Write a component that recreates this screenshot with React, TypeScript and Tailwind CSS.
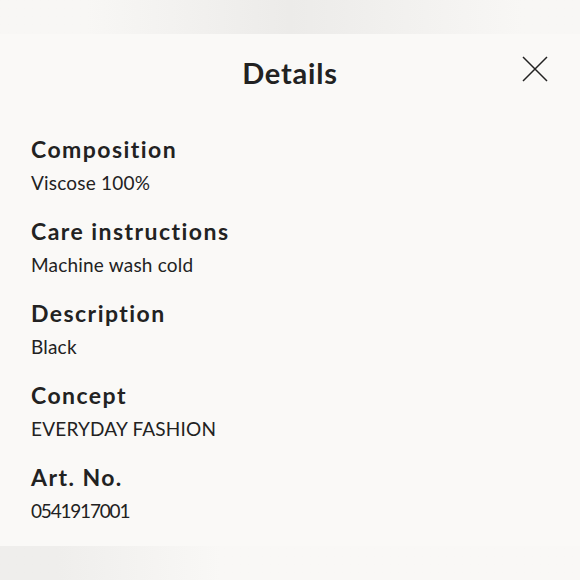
import React from 'react'

const details = [
  { label: 'Composition', value: 'Viscose 100%', tight: false },
  { label: 'Care instructions', value: 'Machine wash cold', tight: false },
  { label: 'Description', value: 'Black', tight: false },
  { label: 'Concept', value: 'EVERYDAY FASHION', tight: false },
  { label: 'Art. No.', value: '0541917001', tight: true },
]

const App = () => {
  return (
    <div className="w-[580px] h-[580px] flex flex-col bg-[#f9f8f6] text-[#222222] font-['Lato','Liberation_Sans',sans-serif] overflow-hidden">
      <div className="h-[34px] bg-linear-to-r from-[#f8f7f5] from-15% via-[#ecebe9] via-50% to-[#f8f7f5] to-90%" />

      <div className="flex-1 flex flex-col bg-[#faf9f7]">
        <div className="relative pt-[21px] flex justify-center">
          <h1 className="text-[29px] leading-[36px] font-bold tracking-[0.8px]">Details</h1>
          <button className="absolute right-[32px] top-[22px] w-[26px] h-[26px] flex items-center justify-center" aria-label="Close">
            <svg width="26" height="26" viewBox="0 0 26 26" fill="none" stroke="#222222" strokeWidth="1.5">
              <path d="M1 1 L25 25 M25 1 L1 25" />
            </svg>
          </button>
        </div>

        <div className="mt-[43px] px-[31px] flex flex-col gap-[19px]">
          {details.map((d) => (
            <div key={d.label} className="flex flex-col">
              <span className="text-[23px] leading-[30px] font-bold tracking-[1.45px]">{d.label}</span>
              <span className={d.tight ? 'mt-[5px] text-[19px] leading-[28px] tracking-[-1.2px]' : 'mt-[5px] text-[19px] leading-[28px] tracking-[0.2px]'}>{d.value}</span>
            </div>
          ))}
        </div>
      </div>

      <div className="h-[34px] bg-linear-to-r from-[#efeeec] from-10% to-[#f9f8f6] to-38%" />
    </div>
  )
}

export default App
